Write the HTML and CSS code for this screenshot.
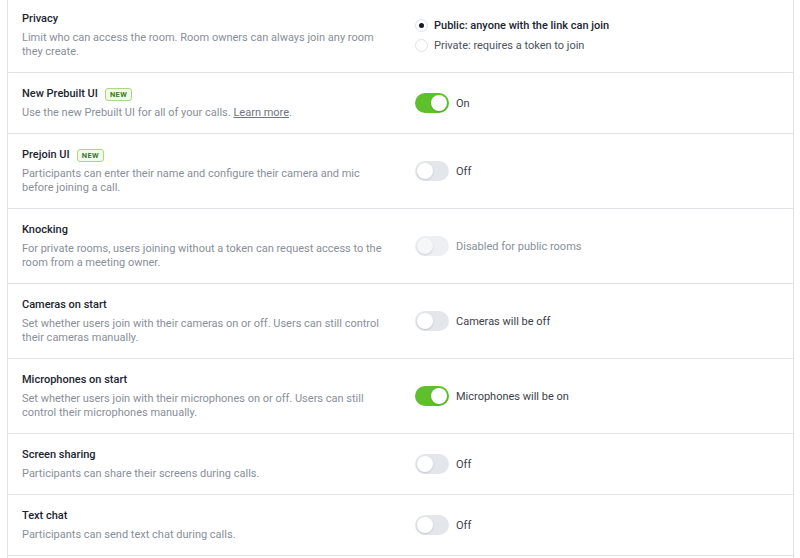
FILE: index.html
```html
<!DOCTYPE html>
<html lang="en">
<head>
  <meta charset="UTF-8" />
  <meta name="viewport" content="width=device-width, initial-scale=1" />
  <title>Room settings</title>
  <link rel="stylesheet" href="styles.css">
</head>
<body>
  <div class="settings">
    <div class="setting">
      <div class="setting-info">
        <div class="setting-title">Privacy</div>
        <p class="setting-desc">Limit who can access the room. Room owners can always join any room they create.</p>
      </div>
      <div class="setting-control radios">
        <label class="radio checked"><span class="radio-mark"></span>Public: anyone with the link can join</label>
        <label class="radio"><span class="radio-mark"></span>Private: requires a token to join</label>
      </div>
    </div>

    <div class="setting">
      <div class="setting-info">
        <div class="setting-title">New Prebuilt UI <span class="badge">New</span></div>
        <p class="setting-desc">Use the new Prebuilt UI for all of your calls. <a href="#">Learn more</a>.</p>
      </div>
      <div class="setting-control">
        <span class="toggle on"><span class="knob"></span></span>
        <span class="toggle-label">On</span>
      </div>
    </div>

    <div class="setting">
      <div class="setting-info">
        <div class="setting-title">Prejoin UI <span class="badge">New</span></div>
        <p class="setting-desc">Participants can enter their name and configure their camera and mic before joining a call.</p>
      </div>
      <div class="setting-control">
        <span class="toggle"><span class="knob"></span></span>
        <span class="toggle-label">Off</span>
      </div>
    </div>

    <div class="setting">
      <div class="setting-info">
        <div class="setting-title">Knocking</div>
        <p class="setting-desc">For private rooms, users joining without a token can request access to the room from a meeting owner.</p>
      </div>
      <div class="setting-control">
        <span class="toggle disabled"><span class="knob"></span></span>
        <span class="toggle-label muted">Disabled for public rooms</span>
      </div>
    </div>

    <div class="setting">
      <div class="setting-info">
        <div class="setting-title">Cameras on start</div>
        <p class="setting-desc">Set whether users join with their cameras on or off. Users can still control their cameras manually.</p>
      </div>
      <div class="setting-control">
        <span class="toggle"><span class="knob"></span></span>
        <span class="toggle-label">Cameras will be off</span>
      </div>
    </div>

    <div class="setting">
      <div class="setting-info">
        <div class="setting-title">Microphones on start</div>
        <p class="setting-desc">Set whether users join with their microphones on or off. Users can still control their microphones manually.</p>
      </div>
      <div class="setting-control">
        <span class="toggle on"><span class="knob"></span></span>
        <span class="toggle-label">Microphones will be on</span>
      </div>
    </div>

    <div class="setting">
      <div class="setting-info">
        <div class="setting-title">Screen sharing</div>
        <p class="setting-desc">Participants can share their screens during calls.</p>
      </div>
      <div class="setting-control">
        <span class="toggle"><span class="knob"></span></span>
        <span class="toggle-label">Off</span>
      </div>
    </div>

    <div class="setting">
      <div class="setting-info">
        <div class="setting-title">Text chat</div>
        <p class="setting-desc">Participants can send text chat during calls.</p>
      </div>
      <div class="setting-control">
        <span class="toggle"><span class="knob"></span></span>
        <span class="toggle-label">Off</span>
      </div>
    </div>
  </div>
</body>
</html>
```

FILE: styles.css
```css
body {
  margin: 0;
  background: #ffffff;
  font-family: Roboto, "Liberation Sans", sans-serif;
  color: #121a24;
  overflow: hidden;
}
.settings {
  margin: -2px 6px 0 7px;
  padding-bottom: 40px;
  border-left: 1px solid #e0e3e8;
  border-right: 1px solid #e0e3e8;
}
.setting {
  display: grid;
  grid-template-columns: 368px 1fr;
  column-gap: 25px;
  align-items: center;
  padding: 13px 14px;
  border-bottom: 1px solid #e0e3e8;
}
.setting-title {
  display: flex;
  align-items: center;
  gap: 7px;
  height: 16px;
  font-size: 11px;
  font-weight: 500;
  line-height: 16px;
  color: #1b2530;
}
.setting-desc {
  margin: 4px 0 0;
  font-size: 11px;
  line-height: 14px;
  color: #888f99;
}
.setting-desc a {
  color: #6e7580;
  text-decoration: underline;
}
.badge {
  display: inline-block;
  padding: 0 4px;
  height: 11px;
  line-height: 11px;
  font-size: 7.5px;
  font-weight: 700;
  letter-spacing: 0.4px;
  text-transform: uppercase;
  color: #3d7a1f;
  background: #f1faea;
  border: 1px solid #a9da82;
  border-radius: 3px;
}
.setting-control {
  display: flex;
  align-items: center;
  gap: 7px;
}
.radios {
  flex-direction: column;
  align-items: flex-start;
  gap: 6px;
  padding-top: 1px;
}
.radio {
  display: flex;
  align-items: center;
  gap: 6px;
  font-size: 11px;
  line-height: 14px;
  color: #4a525d;
}
.radio.checked {
  color: #1b2530;
  font-weight: 500;
}
.radio-mark {
  width: 13px;
  height: 13px;
  border: 1px solid #dfe2e7;
  border-radius: 50%;
  background: #fff;
  box-sizing: border-box;
  position: relative;
}
.radio.checked .radio-mark::after {
  content: "";
  position: absolute;
  left: 3px;
  top: 3px;
  width: 5px;
  height: 5px;
  border-radius: 50%;
  background: #121a24;
}
.toggle {
  width: 34px;
  height: 20px;
  border-radius: 10px;
  background: #e3e6eb;
  padding: 2px;
  box-sizing: border-box;
  display: flex;
}
.toggle .knob {
  width: 16px;
  height: 16px;
  border-radius: 50%;
  background: #fff;
  box-shadow: 0 1px 2px rgba(18, 26, 36, 0.15);
}
.toggle.on {
  background: #5ec12b;
  justify-content: flex-end;
}
.toggle.disabled {
  background: #edeff2;
}
.toggle.disabled .knob {
  background: #f6f7f9;
}
.toggle-label {
  font-size: 11px;
  color: #3a414a;
}
.toggle-label.muted {
  color: #888f99;
}
```
